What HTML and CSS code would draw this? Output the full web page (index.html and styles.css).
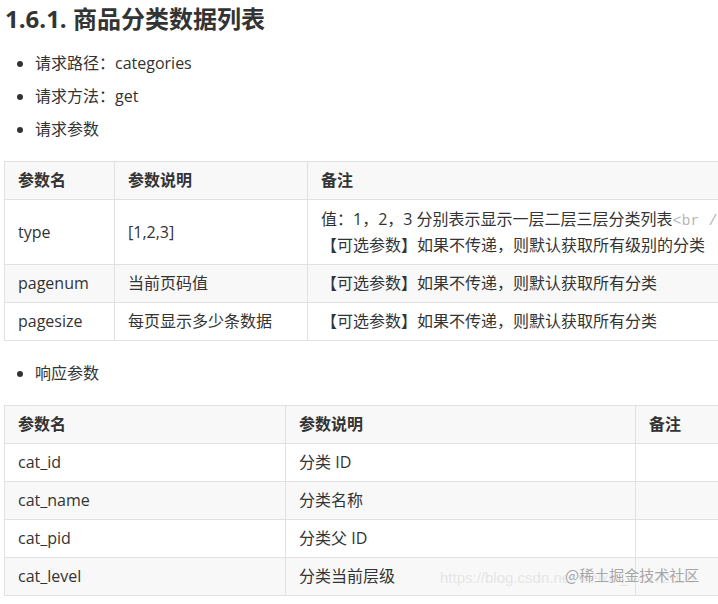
FILE: index.html
```html
<!DOCTYPE html>
<html lang="zh">
<head>
<meta charset="utf-8">
<link rel="stylesheet" href="styles.css">
</head>
<body>
<div class="page">
  <h3 class="title">1.6.1. 商品分类数据列表</h3>
  <ul class="list">
    <li>请求路径：categories</li>
    <li>请求方法：get</li>
    <li>请求参数</li>
  </ul>
  <table class="tbl tbl1">
    <colgroup><col class="c1"><col class="c2"><col class="c3"></colgroup>
    <thead><tr><th>参数名</th><th>参数说明</th><th>备注</th></tr></thead>
    <tbody>
      <tr class="tall"><td>type</td><td>[1,2,3]</td><td class="note">值：1，2，3 分别表示显示一层二层三层分类列表<span class="raw">&lt;br /&gt;</span><br>【可选参数】如果不传递，则默认获取所有级别的分类</td></tr>
      <tr><td>pagenum</td><td>当前页码值</td><td>【可选参数】如果不传递，则默认获取所有分类</td></tr>
      <tr><td>pagesize</td><td>每页显示多少条数据</td><td>【可选参数】如果不传递，则默认获取所有分类</td></tr>
    </tbody>
  </table>
  <ul class="list list2">
    <li>响应参数</li>
  </ul>
  <table class="tbl tbl2">
    <colgroup><col class="d1"><col class="d2"><col class="d3"></colgroup>
    <thead><tr><th>参数名</th><th>参数说明</th><th>备注</th></tr></thead>
    <tbody>
      <tr><td>cat_id</td><td>分类 ID</td><td></td></tr>
      <tr><td>cat_name</td><td>分类名称</td><td></td></tr>
      <tr><td>cat_pid</td><td>分类父 ID</td><td></td></tr>
      <tr><td>cat_level</td><td>分类当前层级</td><td></td></tr>
    </tbody>
  </table>
</div>
<div class="wm-url">https://blog.csdn.net/weixin_44972008</div>
<div class="wm">@稀土掘金技术社区</div>
</body>
</html>
```
FILE: styles.css
```css
html, body {
  margin: 0;
  padding: 0;
  overflow: hidden;
  background: #fff;
}
body {
  width: 718px;
  height: 604px;
  position: relative;
  font-family: "Open Sans", "Noto Sans CJK SC", sans-serif;
  font-size: 16px;
  color: #333;
}
.page {
  padding: 0 0 0 4px;
}
.title {
  margin: 0;
  padding: 4px 0 0 1px;
  font-size: 24px;
  line-height: 30px;
  font-weight: bold;
  color: #333;
}
.list {
  margin: 16px 0 0 0;
  padding-left: 31px;
}
.list li {
  line-height: 26px;
  margin: 0 0 7px 0;
}
.list2 {
  margin-top: 19px;
}
.tbl {
  border-collapse: collapse;
  table-layout: fixed;
  margin-top: 19px;
}
.tbl1 { width: 820px; }
.tbl2 { width: 760px; margin-top: 19px; }
.c1 { width: 110px; }
.c2 { width: 193px; }
.c3 { width: 517px; }
.d1 { width: 281px; }
.d2 { width: 350px; }
.d3 { width: 129px; }
.tbl th, .tbl td {
  border: 1px solid #dfe2e5;
  padding: 6px 13px;
  line-height: 25px;
  text-align: left;
  white-space: nowrap;
  overflow: hidden;
}
.tbl th {
  font-weight: bold;
  background: #f8f8f8;
}
.tbl tbody tr:nth-child(2n) td {
  background: #f8f8f8;
}
.tbl .tall td {
  line-height: 26px;
  padding-bottom: 6px;
}
.raw {
  font-family: "Liberation Mono", monospace;
  color: #b8b8b8;
  font-size: 15px;
  line-height: 0;
}
.wm-url {
  position: absolute;
  left: 440px;
  top: 569px;
  font-family: "Liberation Sans", sans-serif;
  font-size: 15px;
  color: rgba(225, 225, 225, 0.8);
  white-space: nowrap;
}
.wm {
  position: absolute;
  left: 565px;
  top: 564px;
  font-family: "Noto Sans CJK SC", sans-serif;
  font-size: 15px;
  color: #a6a6a6;
  text-shadow: 0 0 2px #fff;
  white-space: nowrap;
}
```
